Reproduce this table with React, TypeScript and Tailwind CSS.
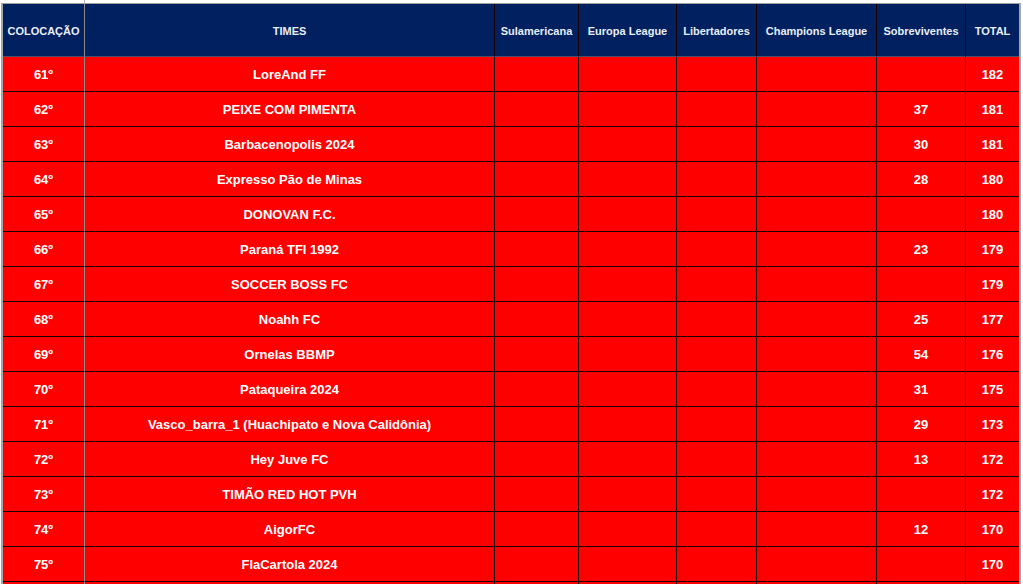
const headers = [
  'COLOCAÇÃO',
  'TIMES',
  'Sulamericana',
  'Europa League',
  'Libertadores',
  'Champions League',
  'Sobreviventes',
  'TOTAL',
]

const rows: [string, string, string, string][] = [
  ['61º', 'LoreAnd FF', '', '182'],
  ['62º', 'PEIXE COM PIMENTA', '37', '181'],
  ['63º', 'Barbacenopolis 2024', '30', '181'],
  ['64º', 'Expresso Pão de Minas', '28', '180'],
  ['65º', 'DONOVAN F.C.', '', '180'],
  ['66º', 'Paraná TFI 1992', '23', '179'],
  ['67º', 'SOCCER BOSS FC', '', '179'],
  ['68º', 'Noahh FC', '25', '177'],
  ['69º', 'Ornelas BBMP', '54', '176'],
  ['70º', 'Pataqueira 2024', '31', '175'],
  ['71º', 'Vasco_barra_1 (Huachipato e Nova Calidônia)', '29', '173'],
  ['72º', 'Hey Juve FC', '13', '172'],
  ['73º', 'TIMÃO RED HOT PVH', '', '172'],
  ['74º', 'AigorFC', '12', '170'],
  ['75º', 'FlaCartola 2024', '', '170'],
]

// border colour per column: first divider is a grey gridline, the rest are black
const colBorder = [
  'border-r border-r-[#8c8c8c]',
  'border-r border-r-[#1a0000]',
  'border-r border-r-[#1a0000]',
  'border-r border-r-[#1a0000]',
  'border-r border-r-[#1a0000]',
  'border-r border-r-[#1a0000]',
  'border-r border-r-[#1a0000]',
  '',
]

function App() {
  return (
    <div className="w-[1023px] h-[584px] overflow-hidden bg-white" style={{ fontFamily: '"Liberation Sans", Arial, sans-serif' }}>
      {/* spreadsheet gridline above the table */}
      <div className="h-[3px] ml-[84px] w-0 border-l border-l-[#b4b4b4]" />

      <div className="ml-[1px] w-[1020px] border-t border-t-[#a0a0a0] border-l-2 border-l-[#a6a6a6] border-r-2 border-r-[#a6a6a6]">
        <div className="grid grid-cols-[82px_410px_84px_98px_80px_120px_89px_53px]">
          {/* Header */}
          {headers.map((h, i) => (
            <div
              key={h}
              className={`h-[53px] pt-[2px] bg-[#002060] border-b border-b-[#4a4f6a] flex items-center justify-center text-[11px] font-bold text-[#e8eef6] whitespace-nowrap ${colBorder[i]}`}
            >
              {h}
            </div>
          ))}

          {/* Rows */}
          {rows.map((r) => {
            const cells = [r[0], r[1], '', '', '', '', r[2], r[3]]
            return cells.map((c, i) => (
              <div
                key={r[0] + '-' + i}
                className={`h-[35px] pt-[1px] bg-[#ff0000] border-b border-b-[#1a0000] flex items-center justify-center text-[13px] font-bold text-white whitespace-nowrap ${colBorder[i]}`}
              >
                {c}
              </div>
            ))
          })}

          {/* next row, cut off by the window edge */}
          {colBorder.map((b, i) => (
            <div key={'next-' + i} className={`h-[35px] bg-[#ff0000] ${b}`} />
          ))}
        </div>
      </div>
    </div>
  )
}

export default App
